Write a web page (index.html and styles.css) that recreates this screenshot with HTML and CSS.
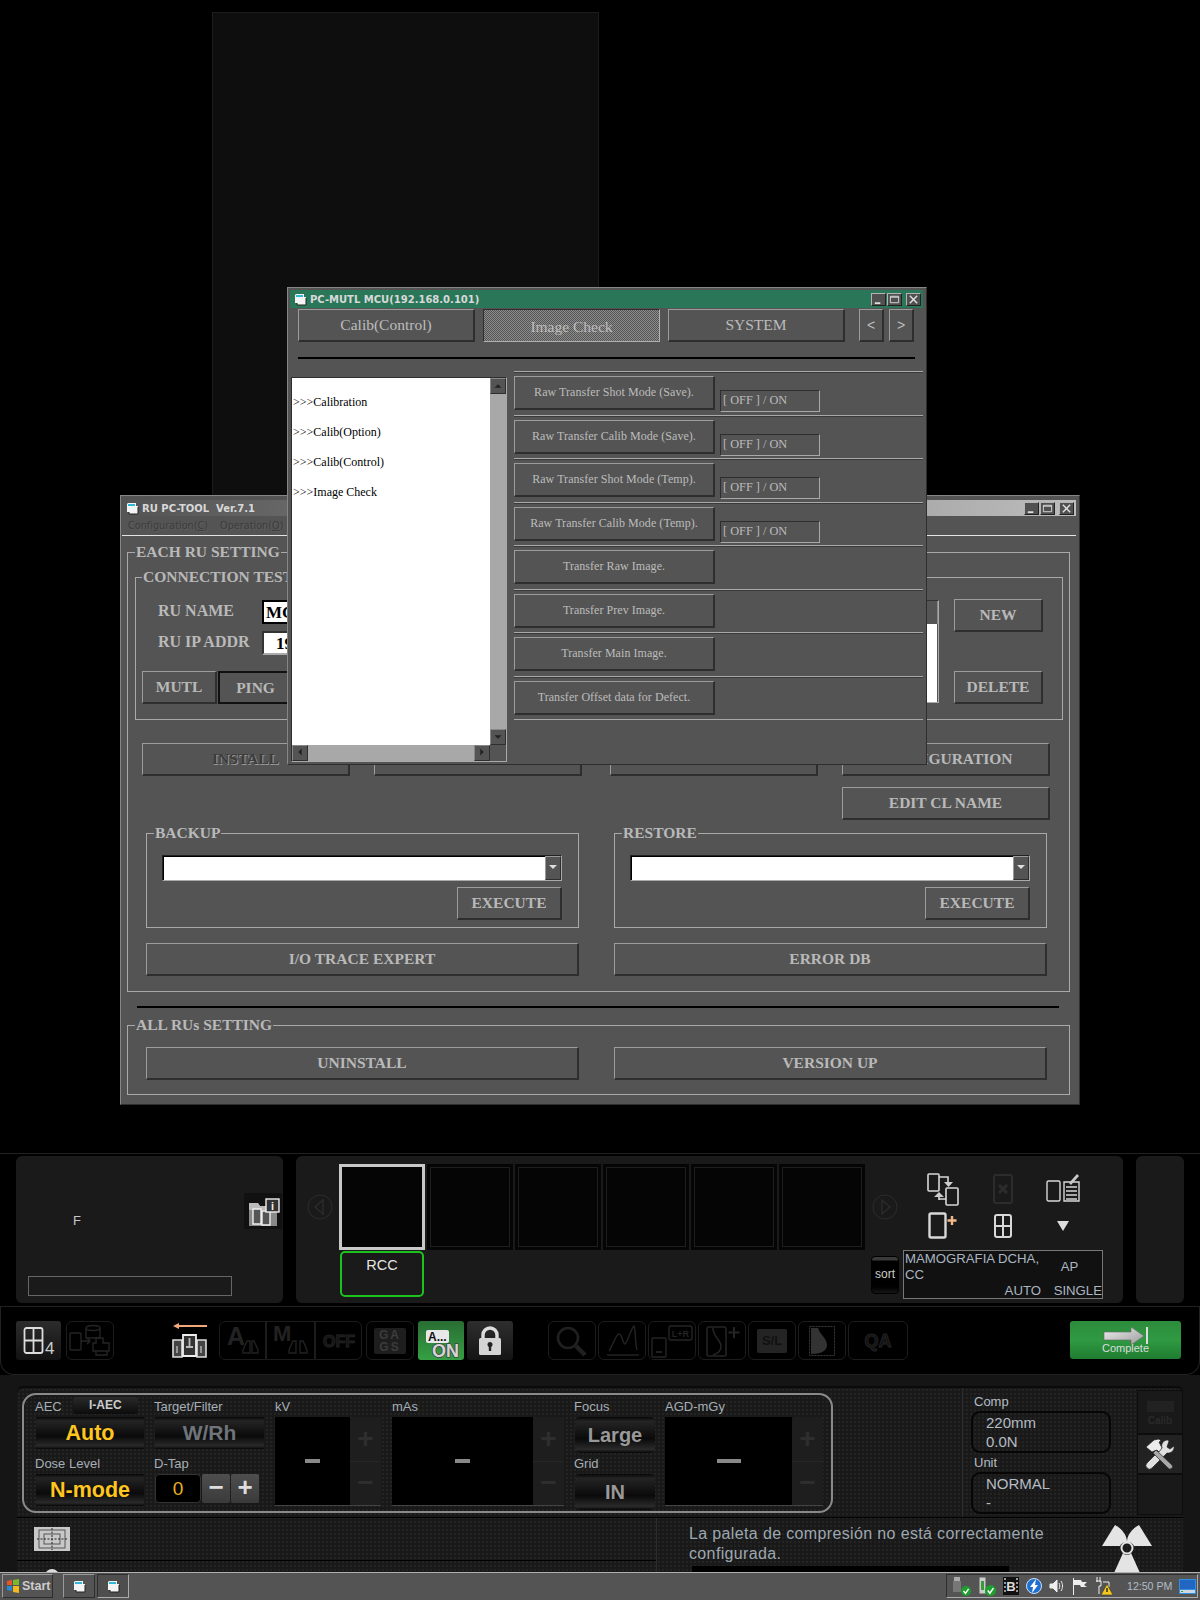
FILE: index.html
```html
<!DOCTYPE html>
<html lang="es">
<head>
    <meta charset="UTF-8">
    <title>RU PC-TOOL</title>
    <link rel="stylesheet" href="styles.css">
</head>
<body>
<svg class="defs" width="0" height="0">
    <symbol id="app" viewBox="0 0 14 14">
        <path d="M3 2h8v3h2v8H4v-2H2V3z" fill="#f4f4f4"/>
        <path d="M3 3h7v2H3z" fill="#30b8d8"/>
        <path d="M4 11v2h9V6" fill="none" stroke="#222"/>
    </symbol>
    <symbol id="tick" viewBox="0 0 10 10">
        <circle cx="5" cy="5" r="5" fill="#1e9e2e"/>
        <path d="M2.5 5l2 2.4L7.6 2.8" fill="none" stroke="#fff" stroke-width="1.4"/>
    </symbol>
</svg>
<div class="screen">
    <div class="viewer">
        <div class="view-pane"></div>

        <div class="window ru-window">
            <div class="titlebar titlebar-off">
                <svg class="title-icon"><use href="#app"/></svg>
                <span>RU PC-TOOL&nbsp; Ver.7.1</span>
                <div class="win-buttons">
                    <span class="win-btn"><svg viewBox="0 0 14 12"><path d="M3 9h6v2H3z" fill="#ddd"/></svg></span>
                    <span class="win-btn"><svg viewBox="0 0 14 12"><path d="M2.5 2.5h9v7h-9zM2.5 3.5h9" fill="none" stroke="#ddd"/></svg></span>
                    <span class="win-btn"><svg viewBox="0 0 14 12"><path d="M3 2l8 8M11 2l-8 8" stroke="#ddd" stroke-width="1.6"/></svg></span>
                </div>
            </div>
            <div class="menubar"><span>Configuration(<u>C</u>)</span><span>Operation(<u>O</u>)</span></div>

            <fieldset class="group group-each">
                <legend>EACH RU SETTING</legend>
                <fieldset class="group group-conn">
                    <legend>CONNECTION TEST</legend>
                    <div class="conn-body">
                        <div class="conn-left">
                            <div class="field-row"><label>RU NAME</label><div class="value value-name">MCU</div></div>
                            <div class="field-row field-row-ip"><label>RU IP ADDR</label><div class="value value-ip">192.168.0.101</div></div>
                            <div class="conn-buttons">
                                <div class="btn btn-mutl">MUTL</div>
                                <div class="btn btn-ping">PING</div>
                            </div>
                        </div>
                        <div class="ru-list">
                            <div class="ru-list-head"></div>
                            <div class="ru-list-body"></div>
                        </div>
                        <div class="conn-right">
                            <div class="btn">NEW</div>
                            <div class="btn">DELETE</div>
                        </div>
                    </div>
                </fieldset>
                <div class="actions">
                    <div class="btn btn-off">INSTALL</div>
                    <div class="btn"></div>
                    <div class="btn action-third"></div>
                    <div class="btn">CONFIGURATION</div>
                    <div class="btn action-edit">EDIT CL NAME</div>
                </div>
                <div class="pair">
                    <fieldset class="group group-file">
                        <legend>BACKUP</legend>
                        <div class="combo"><div class="combo-field"></div><div class="combo-arrow"></div></div>
                        <div class="btn btn-execute">EXECUTE</div>
                    </fieldset>
                    <fieldset class="group group-file">
                        <legend>RESTORE</legend>
                        <div class="combo"><div class="combo-field"></div><div class="combo-arrow"></div></div>
                        <div class="btn btn-execute">EXECUTE</div>
                    </fieldset>
                </div>
                <div class="pair pair-wide">
                    <div class="btn">I/O TRACE EXPERT</div>
                    <div class="btn">ERROR DB</div>
                </div>
            </fieldset>

            <div class="rule rule-ru"></div>

            <fieldset class="group group-all">
                <legend>ALL RUs SETTING</legend>
                <div class="pair pair-all">
                    <div class="btn">UNINSTALL</div>
                    <div class="btn">VERSION UP</div>
                </div>
            </fieldset>
        </div>

        <div class="window mcu-window">
            <div class="titlebar titlebar-on">
                <svg class="title-icon"><use href="#app"/></svg>
                <span>PC-MUTL MCU(192.168.0.101)</span>
                <div class="win-buttons">
                    <span class="win-btn"><svg viewBox="0 0 14 12"><path d="M3 9h6v2H3z" fill="#ddd"/></svg></span>
                    <span class="win-btn"><svg viewBox="0 0 14 12"><path d="M2.5 2.5h9v7h-9zM2.5 3.5h9" fill="none" stroke="#ddd"/></svg></span>
                    <span class="win-btn"><svg viewBox="0 0 14 12"><path d="M3 2l8 8M11 2l-8 8" stroke="#ddd" stroke-width="1.6"/></svg></span>
                </div>
            </div>
            <div class="tabs">
                <div class="tab">Calib(Control)</div>
                <div class="tab tab-on">Image Check</div>
                <div class="tab">SYSTEM</div>
                <div class="tab tab-arrow tab-prev">&lt;</div>
                <div class="tab tab-arrow">&gt;</div>
            </div>
            <div class="rule rule-mcu"></div>
            <div class="mcu-body">
                <div class="menu-list">
                    <div class="menu-items">
                        <div>&gt;&gt;&gt;Calibration</div>
                        <div>&gt;&gt;&gt;Calib(Option)</div>
                        <div>&gt;&gt;&gt;Calib(Control)</div>
                        <div>&gt;&gt;&gt;Image Check</div>
                    </div>
                    <div class="scroll-v">
                        <span class="scroll-btn"><svg viewBox="0 0 16 15"><path d="M4 10h8L8 6z" fill="#222"/></svg></span>
                        <span class="scroll-btn"><svg viewBox="0 0 16 15"><path d="M4 6h8L8 10z" fill="#222"/></svg></span>
                    </div>
                    <div class="scroll-h">
                        <span class="scroll-btn"><svg viewBox="0 0 16 15"><path d="M10 3v8L6 7z" fill="#222"/></svg></span>
                        <span class="scroll-btn"><svg viewBox="0 0 16 15"><path d="M6 3v8l4-4z" fill="#222"/></svg></span>
                    </div>
                    <div class="scroll-corner"></div>
                </div>
                <div class="transfers">
                    <div class="transfer"><div class="transfer-btn">Raw Transfer Shot Mode (Save).</div><div class="toggle">[ OFF ] / ON</div></div>
                    <div class="transfer"><div class="transfer-btn">Raw Transfer Calib Mode (Save).</div><div class="toggle">[ OFF ] / ON</div></div>
                    <div class="transfer"><div class="transfer-btn">Raw Transfer Shot Mode (Temp).</div><div class="toggle">[ OFF ] / ON</div></div>
                    <div class="transfer"><div class="transfer-btn">Raw Transfer Calib Mode (Temp).</div><div class="toggle">[ OFF ] / ON</div></div>
                    <div class="transfer"><div class="transfer-btn">Transfer Raw Image.</div></div>
                    <div class="transfer"><div class="transfer-btn">Transfer Prev Image.</div></div>
                    <div class="transfer"><div class="transfer-btn">Transfer Main Image.</div></div>
                    <div class="transfer"><div class="transfer-btn">Transfer Offset data for Defect.</div></div>
                </div>
            </div>
        </div>
    </div>

    <div class="study">
        <div class="panel patient">
            <div class="patient-top">
                <span class="patient-name">F</span>
                <span class="patient-info">
                    <svg width="38" height="36" viewBox="0 0 38 36">
                        <path d="M5 10h9l2 3h17v20H5z" fill="#888"/>
                        <path d="M5 10h9l2 3h17v4H5z" fill="#bbb"/>
                        <path d="M9 16h8v15H9zM18 18h8v14h-8z" fill="#555" stroke="#eee" stroke-width="1.4"/>
                        <rect x="22" y="6" width="13" height="13" fill="#333" stroke="#eee" stroke-width="1.4"/>
                        <text x="28.5" y="16.5" class="svg-bold" font-size="11" fill="#eee" text-anchor="middle">i</text>
                    </svg>
                </span>
            </div>
            <div class="patient-box"></div>
        </div>

        <div class="panel series">
            <div class="series-prev">
                <svg width="26" height="26" viewBox="0 0 26 26"><circle cx="13" cy="13" r="12" fill="none" stroke="#2c2c2c"/><path d="M16 6v14L8 13z" fill="none" stroke="#2c2c2c" stroke-width="1.4"/></svg>
            </div>
            <div class="thumbs">
                <div class="thumb thumb-on"></div>
                <div class="thumb"></div>
                <div class="thumb"></div>
                <div class="thumb"></div>
                <div class="thumb"></div>
                <div class="thumb"></div>
            </div>
            <div class="series-tools">
                <div class="series-next">
                    <svg width="26" height="26" viewBox="0 0 26 26"><circle cx="13" cy="13" r="12" fill="none" stroke="#2c2c2c"/><path d="M10 6v14l8-7z" fill="none" stroke="#2c2c2c" stroke-width="1.4"/></svg>
                </div>
                <div class="tool-grid">
                    <svg width="34" height="34" viewBox="0 0 34 34" fill="none" stroke="#d8d8d8" stroke-width="1.6">
                        <rect x="2" y="2" width="11" height="17" rx="1"/><rect x="20" y="16" width="12" height="17" rx="1"/>
                        <path d="M13 5h9v6M13 27h7"/><path d="M18 10h9l-4.500 5zM8 25l5-5 5 5z" fill="#ccc" stroke="none"/><path d="M13 25v3" />
                    </svg>
                    <svg width="20" height="30" viewBox="0 0 20 30" fill="none" stroke="#2c2c2c" stroke-width="2">
                        <rect x="1" y="1" width="18" height="28" rx="2"/><path d="M6 11l8 8M14 11l-8 8" stroke-width="3"/>
                    </svg>
                    <svg width="34" height="34" viewBox="0 0 34 34" fill="none" stroke="#d8d8d8" stroke-width="1.4">
                        <rect x="1" y="9" width="13" height="20" rx="1.500"/><path d="M18 10h15v19H18zM20 15h11M20 19h11M20 23h11M20 27h11"/>
                        <path d="M23 11l8-9 2 2-8 9z" fill="#c8c8c8" stroke="none"/>
                    </svg>
                    <svg width="30" height="28" viewBox="0 0 30 28" fill="none">
                        <rect x="1.500" y="1.500" width="16" height="24" rx="1.500" stroke="#d8d8d8" stroke-width="2.400"/>
                        <path d="M24 4v9M19.500 8.500h9" stroke="#f4b98a" stroke-width="2.400"/>
                    </svg>
                    <svg width="18" height="24" viewBox="0 0 18 24" fill="none" stroke="#d8d8d8" stroke-width="2">
                        <rect x="1" y="1" width="16" height="22" rx="2"/><path d="M9 1v22M1 12h16"/>
                    </svg>
                    <svg width="14" height="10" viewBox="0 0 14 10"><path d="M1 0h12L7 10z" fill="#ddd"/></svg>
                </div>
            </div>
            <div></div>
            <div class="thumb-label">RCC</div>
            <div class="exam-row">
                <div class="sort">sort</div>
                <div class="exam">
                    <div class="exam-title">MAMOGRAFIA DCHA, CC</div>
                    <div class="exam-view">AP</div>
                    <div class="exam-mode">AUTO</div>
                    <div class="exam-type">SINGLE</div>
                </div>
            </div>
        </div>

        <div class="panel panel-side"></div>
    </div>

    <div class="toolbar">
        <div class="tool t-layout">
            <svg width="42" height="36" viewBox="0 0 42 36" fill="none">
                <rect x="6.500" y="5" width="18" height="25" rx="2" stroke="#ddd" stroke-width="1.800"/>
                <path d="M15.500 5v25M6.500 17.500h18" stroke="#ddd" stroke-width="1.800"/>
                <text x="27" y="31" class="svg-sans" font-size="17" fill="#ccc">4</text>
            </svg>
        </div>
        <div class="tool t-route">
            <svg width="42" height="34" viewBox="0 0 42 34" fill="none" stroke="#242424" stroke-width="1.400">
                <ellipse cx="24" cy="4" rx="7" ry="2.500"/><path d="M17 4v10h14V4"/>
                <rect x="1" y="9" width="11" height="17" rx="1"/><path d="M12 17h9M18 14l3 3-3 3"/>
                <path d="M27 14h7v5h6v8h-16v-8h3zM27 27h11v4H27z"/>
            </svg>
        </div>
        <div class="tool-plain t-view">
            <svg width="38" height="38" viewBox="0 0 38 38" fill="none">
                <path d="M36 4H8" stroke="#f0a878" stroke-width="2"/><path d="M8 1L2 4l6 3z" fill="#f0a878"/>
                <path d="M2 18h9v17H2zM26 18h9v17h-9z" fill="#444" stroke="#ddd" stroke-width="1.600"/>
                <path d="M12 13h13v21H12z" fill="#333" stroke="#eee" stroke-width="1.800"/>
                <path d="M18.500 16v8M15 25h7" stroke="#bbb" stroke-width="1.800"/>
                <path d="M6 24v7M30 24v7" stroke="#aaa" stroke-width="1.600"/>
            </svg>
        </div>
        <div class="tool t-a">
            <svg width="42" height="36" viewBox="0 0 42 36">
                <text x="5" y="22" class="svg-bold" font-size="25" fill="#222">A</text>
                <path d="M25 18l-4 9v3h7v-12zM30 18v12h6v-3l-4-9z" fill="none" stroke="#222" stroke-width="1.300"/>
            </svg>
        </div>
        <div class="tool t-m">
            <svg width="44" height="36" viewBox="0 0 44 36">
                <text x="4" y="18" class="svg-bold" font-size="22" fill="#222">M</text>
                <path d="M24 18l-4 9v3h7v-12zM31 18v12h7v-3l-4-9z" fill="none" stroke="#222" stroke-width="1.300"/>
            </svg>
        </div>
        <div class="tool t-off">
            <svg width="42" height="22" viewBox="0 0 42 22"><text x="21" y="17" class="svg-bold" font-size="16" fill="#111" stroke="#222" text-anchor="middle">OFF</text></svg>
        </div>
        <div class="tool t-ga">
            <div class="ga-badge"><span>GA</span><span>GS</span></div>
        </div>
        <div class="tool tool-green t-on">
            <svg width="44" height="38" viewBox="0 0 44 38">
                <rect x="7" y="8" width="23" height="13" rx="2" fill="#e8e8e8"/>
                <text x="9" y="19" class="svg-bold" font-size="12" fill="#111">A...</text>
                <text x="13" y="35" class="svg-bold svg-outlined" font-size="18">ON</text>
            </svg>
        </div>
        <div class="tool tool-dark t-lock">
            <svg width="24" height="30" viewBox="0 0 24 30">
                <path d="M5 13V9a7 7 0 0 1 14 0v4" fill="none" stroke="#ddd" stroke-width="3.400"/>
                <rect x="1" y="12" width="22" height="17" rx="1.500" fill="#d4d4d4"/>
                <circle cx="12" cy="18.500" r="2.500" fill="#222"/><path d="M10.800 19h2.400v6h-2.400z" fill="#222"/>
            </svg>
        </div>
        <div class="tool t-search">
            <svg width="38" height="32" viewBox="0 0 38 32" fill="none" stroke="#202020">
                <circle cx="15" cy="13" r="10" stroke-width="2.600"/><path d="M23 21l9 9" stroke-width="4.500"/>
            </svg>
        </div>
        <div class="tool t-curve">
            <svg width="38" height="34" viewBox="0 0 38 34" fill="none" stroke="#242424" stroke-width="1.400">
                <path d="M4 31h32"/><path d="M6 27c4-6 7-17 10-17s4 10 6 10 6-16 9-18c2 5 1 18 3 24"/>
            </svg>
        </div>
        <div class="tool t-lr">
            <svg width="42" height="34" viewBox="0 0 42 34" fill="none" stroke="#242424" stroke-width="1.400">
                <rect x="1" y="14" width="14" height="19" rx="1"/><path d="M5 28h6" stroke-width="1.800"/>
                <rect x="18" y="2" width="23" height="14" rx="2"/>
                <text x="29.500" y="13" class="svg-bold" font-size="9" fill="#242424" stroke="none" text-anchor="middle">L+R</text>
            </svg>
        </div>
        <div class="tool t-mark">
            <svg width="36" height="34" viewBox="0 0 36 34" fill="none" stroke="#242424" stroke-width="1.600">
                <rect x="3" y="3" width="19" height="29" rx="1.500"/>
                <path d="M9 4c0 9 8 12 8 18 0 5-4 8-8 9"/><path d="M30 3v11M24.500 8.500h11" stroke-width="2"/>
            </svg>
        </div>
        <div class="tool t-sl">
            <div class="sl-badge">S/L</div>
        </div>
        <div class="tool t-ms">
            <svg width="26" height="30" viewBox="0 0 26 30" fill="none">
                <rect x=".500" y=".500" width="25" height="29" stroke="#3a3a3a" stroke-dasharray="2 1"/>
                <path d="M2 2h7c2 7 9 10 9 17 0 6-6 9-16 9z" fill="#333"/>
            </svg>
        </div>
        <div class="tool t-qa">
            <svg width="40" height="24" viewBox="0 0 40 24"><text x="20" y="18" class="svg-bold" font-size="18" fill="#111" stroke="#222" text-anchor="middle">QA</text></svg>
        </div>
        <div class="complete">
            <svg width="46" height="20" viewBox="0 0 46 20">
                <defs><linearGradient id="arrow" x1="0" y1="0" x2="1" y2="1"><stop offset="0" stop-color="#f0f0f0"/><stop offset="1" stop-color="#999"/></linearGradient></defs>
                <path d="M1 6h27V1l13 9-13 9v-5H1z" fill="url(#arrow)" stroke="#666" stroke-width=".6"/>
                <path d="M44 1v17" stroke="#ddd" stroke-width="2"/>
            </svg>
            <span>Complete</span>
        </div>
    </div>

    <div class="console">
        <div class="console-panel">
            <div class="console-top">
                <div class="exposure">
                    <div class="exp-col exp-aec">
                        <div class="exp-head"><span>AEC</span><span class="iaec">I-AEC</span></div>
                        <div class="mode mode-on">Auto</div>
                        <div class="exp-head exp-head-low"><span>Dose Level</span></div>
                        <div class="mode mode-on">N-mode</div>
                    </div>
                    <div class="exp-col exp-target">
                        <div class="exp-head"><span>Target/Filter</span></div>
                        <div class="mode mode-off">W/Rh</div>
                        <div class="exp-head exp-head-low"><span>D-Tap</span></div>
                        <div class="dtap">
                            <span class="dtap-value">0</span>
                            <span class="dtap-btn">−</span>
                            <span class="dtap-btn">+</span>
                        </div>
                    </div>
                    <div class="exp-col exp-kv">
                        <div class="exp-head"><span>kV</span></div>
                        <div class="readout"><div class="readout-screen"><i></i></div><div class="stepper"><span>+</span><span>−</span></div></div>
                    </div>
                    <div class="exp-col exp-mas">
                        <div class="exp-head"><span>mAs</span></div>
                        <div class="readout"><div class="readout-screen"><i></i></div><div class="stepper"><span>+</span><span>−</span></div></div>
                    </div>
                    <div class="exp-col exp-focus">
                        <div class="exp-head"><span>Focus</span></div>
                        <div class="mode mode-focus">Large</div>
                        <div class="exp-head exp-head-grid"><span>Grid</span></div>
                        <div class="mode mode-focus">IN</div>
                    </div>
                    <div class="exp-col exp-agd">
                        <div class="exp-head"><span>AGD-mGy</span></div>
                        <div class="readout"><div class="readout-screen readout-big"><i></i></div><div class="stepper"><span>+</span><span>−</span></div></div>
                    </div>
                </div>
                <div class="comp">
                    <div class="comp-label">Comp</div>
                    <div class="comp-box"><span>220mm</span><span>0.0N</span></div>
                    <div class="comp-label">Unit</div>
                    <div class="comp-box"><span>NORMAL</span><span>-</span></div>
                </div>
                <div class="rail">
                    <div class="rail-cell rail-calib"><i></i><span>Calib</span></div>
                    <div class="rail-cell rail-tools">
                        <svg width="30" height="32" viewBox="0 0 30 32">
                            <path d="M23 2a6 6 0 0 0-6 8L2 25a3 3 0 0 0 5 5l15-15a6 6 0 0 0 7-7l-4 3-3-2 2-6z" fill="#e0e0e0" stroke="#222" stroke-width=".7"/>
                            <path d="M11 12l16 15a2.500 2.500 0 0 1-4 3L8 15z" fill="#a8a8a8" stroke="#222" stroke-width=".7"/>
                            <path d="M1 9l8-7 5-1 2 2-2 1 2 4 1 2-3 4-2-2-3 1-2 1z" fill="#ececec" stroke="#222" stroke-width=".7"/>
                        </svg>
                    </div>
                    <div class="rail-cell rail-empty"></div>
                </div>
            </div>
            <div class="console-bottom">
                <div class="console-left">
                    <div class="aim">
                        <div class="aim-icon">
                            <svg width="30" height="22" viewBox="0 0 30 22" fill="none" stroke="#555">
                                <rect x="2" y="2" width="26" height="18"/><rect x="7" y="6" width="16" height="10"/>
                                <path d="M0 11h30M15 0v22" stroke="#222" stroke-dasharray="2 1.500"/>
                            </svg>
                        </div>
                    </div>
                    <div class="standby"><i></i><span>STANDBY</span></div>
                </div>
                <div class="console-msg">
                    <div class="msg-col">
                        <div class="msg-text">La paleta de compresión no está correctamente configurada.</div>
                        <div class="msg-bar"></div>
                    </div>
                    <svg class="radiation" width="52" height="54" viewBox="0 0 52 54">
                        <path d="M14 1L1 22h18c1-2 3-4 7-4 0-7-5-13-12-17z" fill="#e4e4e4"/>
                        <path d="M38 1l13 21H33c-1-2-3-4-7-4 0-7 5-13 12-17z" fill="#e4e4e4"/>
                        <path d="M26 31c-2 0-3-1-4-2L13 49h26l-9-20c-1 1-2 2-4 2z" fill="#e4e4e4"/>
                        <circle cx="26" cy="24" r="5.500" fill="none" stroke="#e4e4e4" stroke-width="2"/>
                    </svg>
                </div>
            </div>
        </div>
    </div>

    <div class="taskbar">
        <div class="start">
            <svg width="14" height="14" viewBox="0 0 14 14">
                <path d="M1 2l5-1v5H1z" fill="#e8542a"/><path d="M7 1l6-1v6H7z" fill="#7cb82e"/>
                <path d="M1 7h5v5l-5-1z" fill="#2a88d8"/><path d="M7 7h6v7l-6-1z" fill="#f4b81c"/>
            </svg>
            <span>Start</span>
        </div>
        <div class="task"><svg width="14" height="14"><use href="#app"/></svg></div>
        <div class="task task-on"><svg width="14" height="14"><use href="#app"/></svg></div>
        <div class="tray">
            <svg width="18" height="20" viewBox="0 0 18 20"><path d="M1 1h6v4H1z" fill="#aaa"/><path d="M0 5h8v11H0z" fill="#777"/><use href="#tick" x="8" y="10" width="10" height="10"/></svg>
            <svg width="18" height="20" viewBox="0 0 18 20"><path d="M1 1h7v17H1z" fill="#ccc" stroke="#555"/><path d="M3 5h3v9H3z" fill="#3a9a3a"/><use href="#tick" x="7" y="9" width="11" height="11"/></svg>
            <svg width="16" height="18" viewBox="0 0 16 18"><rect width="16" height="18" fill="#111"/><path d="M1 1h2v2H1zM1 5h2v2H1zM1 9h2v2H1zM1 13h2v2H1zM13 1h2v2h-2zM13 5h2v2h-2zM13 9h2v2h-2zM13 13h2v2h-2z" fill="#999"/><text x="8" y="14" class="svg-bold" font-size="13" fill="#ddd" text-anchor="middle">B</text></svg>
            <svg width="16" height="18" viewBox="0 0 16 18"><circle cx="8" cy="9" r="7.500" fill="#1f6fd0" stroke="#cfe0f4"/><path d="M10 2L4 10h3l-1 6 6-8H9z" fill="#fff"/></svg>
            <svg width="16" height="16" viewBox="0 0 16 16" fill="none" stroke="#eee"><path d="M1 6h3l4-4v12l-4-4H1z" fill="#eee"/><path d="M10 5c1 2 1 4 0 6M12 3c2 3 2 7 0 10"/></svg>
            <svg width="16" height="17" viewBox="0 0 16 17"><path d="M1.500 0v17" stroke="#eee"/><path d="M2 2h7l1 2h5l-3 3 3 2H9L8 7H2z" fill="#eee"/></svg>
            <svg width="18" height="20" viewBox="0 0 18 20" fill="none"><path d="M2 1v5M5 1v5M1 5h5v5H4v8" stroke="#eee"/><path d="M8 6h6v5" stroke="#eee"/><path d="M12 8l6 11H6z" fill="#f2c81e" stroke="#333" stroke-width=".6"/><path d="M12 12v4" stroke="#222" stroke-width="1.400"/></svg>
            <span class="clock">12:50 PM</span>
            <svg class="desk" width="17" height="15" viewBox="0 0 17 15"><rect width="17" height="15" fill="#2f8fe0"/><rect x="1" y="1" width="15" height="9" fill="#2266c4"/><path d="M1 11h15v3H1z" fill="#cfd8e0"/><path d="M2 12h2v1H2z" fill="#3aa53a"/></svg>
        </div>
    </div>
</div>
</body>
</html>
```

FILE: styles.css
```css
* {
    box-sizing: border-box;
}
html, body {
    margin: 0;
    background: #000;
}
.defs {
    display: block;
    height: 0;
}
.screen {
    width: 1200px;
    height: 1600px;
    overflow: hidden;
    display: flex;
    flex-direction: column;
    font-family: "Liberation Sans", Arial, sans-serif;
}
.svg-bold {
    font-family: "Liberation Sans", Arial, sans-serif;
    font-weight: bold;
}
.svg-sans {
    font-family: "Liberation Sans", Arial, sans-serif;
}
.svg-outlined {
    fill: #d4d4d4;
    stroke: #444;
    stroke-width: 1.6px;
    paint-order: stroke;
}

/* viewer area + the two old win32 windows */
.viewer {
    position: relative;
    height: 1153px;
    flex: none;
}
.view-pane {
    width: 387px;
    height: 500px;
    margin: 0 0 0 212px;
    position: relative;
    top: 12px;
    background: #0e0e0e;
    border: 1px solid #1c1c1c;
}
.window {
    position: absolute;
    background: #545454;
    border: 1px solid;
    border-color: #868686 #2e2e2e #2e2e2e #868686;
    font-family: "Liberation Serif", "Times New Roman", serif;
    color: #bcbcbc;
}
.ru-window {
    left: 120px;
    top: 495px;
    width: 960px;
    height: 610px;
    padding: 4px 3px 0 1px;
}
.mcu-window {
    left: 287px;
    top: 287px;
    width: 640px;
    height: 478px;
    padding: 2px 3px 0 2px;
}
.titlebar {
    display: flex;
    align-items: center;
    font-family: "DejaVu Sans", sans-serif;
    font-weight: bold;
    font-size: 10px;
    color: #d8d8d8;
}
.titlebar-off {
    height: 16px;
    background: linear-gradient(90deg, #545454, #bcbcbc);
}
.titlebar-on {
    height: 18px;
    background: #297758;
}
.title-icon {
    width: 14px;
    height: 14px;
    margin: 0 3px 0 3px;
}
.win-buttons {
    margin-left: auto;
    display: flex;
    gap: 1px;
    padding-right: 2px;
}
.win-btn {
    width: 15px;
    height: 13px;
    background: #505050;
    border: 1px solid;
    border-color: #b4b4b4 #222 #222 #b4b4b4;
    display: block;
}
.win-btn:last-child {
    margin-left: 3px;
}
.win-btn svg {
    display: block;
    width: 13px;
    height: 11px;
}
.menubar {
    height: 20px;
    display: flex;
    gap: 12px;
    padding: 1px 0 0 6px;
    font-family: "DejaVu Sans", sans-serif;
    font-size: 9.7px;
    line-height: 18px;
    color: #3c3c3c;
    text-shadow: 1px 1px 0 #5e5e5e;
    border-bottom: 1px solid #e4e4e4;
}
.group {
    margin: 0;
    padding: 0;
    min-width: 0;
    border: 1px solid #a9a9a9;
}
.group legend {
    padding: 0 1px;
    margin-left: 0;
    font-size: 15.5px;
    font-weight: bold;
    line-height: 18px;
    color: #b9b9b9;
}
.group-each {
    margin: 7px 6px 0 5px;
    padding: 0 6px 15px 7px;
}
.group-conn {
    margin-top: 7px;
    padding: 14px 19px 15px 6px;
}
.conn-body {
    display: flex;
}
.conn-left {
    width: 308px;
    flex: none;
}
.field-row {
    display: flex;
    align-items: center;
    height: 24px;
}
.field-row-ip {
    margin-top: 7px;
}
.field-row label {
    width: 120px;
    padding-left: 16px;
    font-size: 16px;
    margin-top: -3px;
}
.field-row label, .btn {
    font-weight: bold;
    color: #b9b9b9;
}
.btn {
    font-size: 15.5px;
}
.value {
    width: 180px;
    height: 24px;
    background: #fff;
    color: #000;
    font-size: 17px;
    font-weight: bold;
    line-height: 21px;
    border: 2px solid #000;
    padding-left: 2px;
}
.value-ip {
    border-color: #333 #aaa #aaa #333;
    padding-left: 12px;
}
.conn-buttons {
    display: flex;
    margin-top: 16px;
}
.btn {
    height: 33px;
    display: flex;
    align-items: center;
    justify-content: center;
    border: 1px solid;
    border-width: 1px 2px 2px 1px;
    border-color: #9c9c9c #2e2e2e #2e2e2e #9c9c9c;
    background: #545454;
}
.btn-mutl {
    width: 75px;
}
.btn-ping {
    width: 75px;
    margin-left: 1px;
    border: 2px solid #111;
    border-color: #111 #111 #111 #111;
}
.ru-list {
    width: 489px;
    height: 103px;
    flex: none;
    border: 1px solid;
    border-color: #333 #aaa #aaa #333;
    display: flex;
    flex-direction: column;
}
.ru-list-head {
    height: 23px;
    border-right: 1px solid #888;
}
.ru-list-body {
    flex: 1;
    background: #fff;
    margin-right: 1px;
}
.conn-right {
    width: 89px;
    flex: none;
    margin: -1px 0 0 15px;
    display: flex;
    flex-direction: column;
    justify-content: space-between;
}
.actions {
    display: grid;
    grid-template-columns: 208px 208px 212px 208px;
    column-gap: 24px;
    row-gap: 11px;
    margin: 23px 0 0 7px;
}
.action-third {
    width: 208px;
    justify-self: end;
}
.action-edit {
    grid-column: 4;
}
.btn-off {
    color: #3c3c3c;
    text-shadow: 1px 1px 0 #9a9a9a;
}
.pair {
    display: grid;
    grid-template-columns: 433px 433px;
    column-gap: 35px;
    margin: 4px 0 0 11px;
}
.pair-wide {
    margin-top: 15px;
}
.group-file {
    padding: 13px 16px 8px 15px;
    height: 104px;
}
.group-file legend {
    margin-left: -8px;
}
.combo {
    display: flex;
    height: 26px;
    border: 1px solid;
    border-color: #222 #aaa #aaa #222;
}
.combo-field {
    flex: 1;
    background: #fff;
    border-top: 1px solid #000;
    border-left: 1px solid #000;
}
.combo-arrow {
    width: 16px;
    position: relative;
    border: 1px solid;
    border-color: #999 #2e2e2e #2e2e2e #999;
}
.combo-arrow::after {
    content: "";
    position: absolute;
    left: 3px;
    top: 8px;
    border: 4px solid transparent;
    border-top: 4px solid #ddd;
}
.btn-execute {
    width: 105px;
    margin: 6px 0 0 auto;
}
.rule {
    height: 2px;
    background: #000;
}
.rule-ru {
    margin: 14px 17px 0 15px;
}
.group-all {
    margin: 8px 6px 0 5px;
    padding: 13px 24px 14px 18px;
}
.group-all legend {
    margin-left: -11px;
}
.pair-all {
    margin: 0;
}

/* mcu window */
.tabs {
    display: flex;
    margin: 1px 0 0 8px;
}
.tab {
    width: 177px;
    height: 33px;
    margin-right: 8px;
    display: flex;
    align-items: center;
    justify-content: center;
    font-size: 15.5px;
    color: #bcbcbc;
    border: 1px solid;
    border-width: 1px 2px 2px 1px;
    border-color: #9c9c9c #2e2e2e #2e2e2e #9c9c9c;
}
.tab-on {
    border-width: 1px 1px 1px 1px;
    border-color: #2e2e2e #b0b0b0 #b0b0b0 #2e2e2e;
    background: repeating-conic-gradient(#8c8c8c 0 25%, #555 0 50%) 0 0 / 2px 2px;
    padding-top: 2px;
}
.tab-arrow {
    width: 25px;
    margin-right: 5px;
    font-family: "Liberation Sans", sans-serif;
    font-size: 14px;
}
.tab-prev {
    margin-left: 6px;
}
.rule-mcu {
    margin: 15px 8px 0 8px;
}
.mcu-body {
    display: flex;
    margin-top: 12px;
}
.menu-list {
    width: 216px;
    height: 385px;
    margin: 6px 0 0 1px;
    display: grid;
    grid-template-columns: 198px 16px;
    grid-template-rows: 367px 16px;
    border: 1px solid;
    border-color: #2e2e2e #a9a9a9 #a9a9a9 #2e2e2e;
}
.menu-items {
    background: #fff;
    color: #000;
    font-size: 12px;
    padding-top: 9px;
    padding-left: 1px;
    line-height: 30px;
}
.scroll-v {
    background: #a8a8a8;
    display: flex;
    flex-direction: column;
    justify-content: space-between;
}
.scroll-h {
    background: #a8a8a8;
    display: flex;
    justify-content: space-between;
}
.scroll-btn {
    width: 16px;
    height: 16px;
    display: block;
    background: #545454;
    border: 1px solid;
    border-color: #888 #2e2e2e #2e2e2e #888;
}
.scroll-btn svg {
    display: block;
    width: 14px;
    height: 13px;
}
.transfers {
    width: 409px;
    margin-left: 7px;
    display: grid;
    grid-auto-rows: 43.5px;
    border-bottom: 1px solid #a9a9a9;
    height: 349px;
}
.transfer {
    display: flex;
    border-top: 1px solid #a9a9a9;
    box-shadow: inset 0 1px 0 #3a3a3a;
}
.transfer-btn {
    width: 201px;
    height: 34px;
    margin-top: 4px;
    display: flex;
    align-items: center;
    justify-content: center;
    font-size: 12px;
    letter-spacing: .05px;
    color: #bcbcbc;
    border: 1px solid;
    border-width: 1px 2px 2px 1px;
    border-color: #9c9c9c #2e2e2e #2e2e2e #9c9c9c;
}
.toggle {
    width: 100px;
    height: 22px;
    margin: 18px 0 0 5px;
    padding-left: 2px;
    font-size: 12.3px;
    line-height: 19px;
    color: #bcbcbc;
    border: 1px solid;
    border-color: #2e2e2e #a9a9a9 #a9a9a9 #2e2e2e;
}

/* study strip */
.study {
    flex: none;
    height: 154px;
    border-top: 1px solid #222;
    border-bottom: 1px solid #222;
    padding: 2px 16px 0 16px;
    display: flex;
    gap: 13px;
    color: #c8c8c8;
}
.panel {
    height: 147px;
    background: #1a1a1a;
    border-radius: 6px;
}
.patient {
    width: 267px;
    padding: 0 1px 0 12px;
}
.patient-top {
    height: 120px;
    display: flex;
    align-items: flex-start;
}
.patient-name {
    margin: 57px 0 0 45px;
    font-size: 13px;
}
.patient-info {
    margin: 37px 0 0 auto;
    width: 38px;
    height: 36px;
    background: #111;
    display: block;
}
.patient-info svg {
    display: block;
}
.patient-box {
    width: 204px;
    height: 20px;
    border: 1px solid #666;
}
.series {
    width: 827px;
    display: grid;
    grid-template-columns: 43px 528px 1fr;
    grid-template-rows: 94px 1fr;
}
.series-prev {
    padding: 38px 0 0 11px;
}
.thumbs {
    padding-top: 8px;
    display: flex;
    gap: 2px;
}
.thumb {
    width: 86px;
    height: 86px;
    background: #050505;
    position: relative;
    border: 3px solid #050505;
    outline: 1px solid #1e1e1e;
    outline-offset: -4px;
}
.thumb-on {
    border-color: #c8c8c8;
    outline: none;
}
.series-tools {
    display: flex;
    padding-left: 5px;
}
.series-next {
    padding-top: 38px;
}
.tool-grid {
    width: 175px;
    margin-left: 15px;
    padding-top: 14px;
    display: grid;
    grid-template-columns: 60px 60px 60px;
    grid-template-rows: 37px 37px;
    justify-items: center;
    align-items: center;
}
.thumb-label {
    width: 84px;
    height: 46px;
    margin: 1px 0 0 1px;
    border: 2px solid #1ec21e;
    border-radius: 5px;
    text-align: center;
    font-size: 14.5px;
    line-height: 17px;
    padding-top: 4px;
    color: #e4e4e4;
}
.exam-row {
    display: flex;
    padding-left: 4px;
    align-items: flex-start;
}
.sort {
    width: 28px;
    height: 38px;
    margin-top: 6px;
    background: linear-gradient(#3a3a3a 0, #3a3a3a 3px, #000 4px, #000 30px, #1e1e1e 38px);
    border: 1px solid #000;
    border-radius: 4px;
    color: #ccc;
    font-size: 12px;
    line-height: 34px;
    text-align: center;
}
.exam {
    width: 200px;
    height: 49px;
    margin-left: 4px;
    border: 1px solid #777;
    background: #111;
    color: #aab6c2;
    font-size: 13.2px;
    line-height: 16px;
    display: grid;
    grid-template-columns: 136px 1fr;
    grid-template-rows: 32px 15px;
    padding-left: 1px;
}
.exam-view {
    text-align: center;
    align-self: center;
    padding-right: 4px;
}
.exam-mode {
    text-align: right;
}
.exam-type {
    text-align: right;
}
.panel-side {
    width: 48px;
}

/* toolbar */
.toolbar {
    flex: none;
    height: 68px;
    padding-top: 14px;
    display: flex;
    align-items: flex-start;
    border-bottom: 1px solid #222;
    border-radius: 0 0 14px 14px;
    border-left: 1px solid #222;
    border-right: 1px solid #222;
    padding-left: 15px;
}
.tool, .tool-plain {
    height: 39px;
    flex: none;
    display: flex;
    align-items: center;
    justify-content: center;
}
.tool {
    width: 48px;
    margin-left: 2px;
    border: 1px solid #1c1c1c;
    border-radius: 6px;
}
.t-layout {
    width: 45px;
    margin-left: 0;
    background: linear-gradient(#2c2c2c, #121212);
    border: none;
    border-radius: 3px;
}
.t-route {
    margin-left: 5px;
}
.t-view {
    width: 38px;
    margin-left: 57px;
}
.t-a {
    width: 47px;
    margin-left: 10px;
    border-radius: 6px 0 0 6px;
}
.t-m {
    width: 49px;
    margin-left: 0;
    border-radius: 0;
}
.t-off {
    width: 47px;
    margin-left: 0;
    border-radius: 0 6px 6px 0;
}
.t-ga {
    margin-left: 4px;
}
.ga-badge {
    width: 32px;
    height: 26px;
    background: #1e1e1e;
    border-radius: 2px;
    display: flex;
    flex-direction: column;
    align-items: center;
    font-size: 12px;
    font-weight: bold;
    line-height: 12px;
    letter-spacing: 2px;
    color: #3c3c3c;
    padding-top: 1px;
}
.tool-green {
    width: 46px;
    margin-left: 4px;
    border: none;
    border-radius: 3px;
    background: linear-gradient(#2a6d33, #34a044);
}
.tool-dark {
    width: 46px;
    margin-left: 3px;
    border: none;
    border-radius: 3px;
    background: linear-gradient(#2e2e2e, #141414);
}
.t-search {
    margin-left: 35px;
}
.sl-badge {
    width: 30px;
    height: 24px;
    background: #242424;
    border-radius: 2px;
    font-size: 13px;
    font-weight: bold;
    line-height: 24px;
    text-align: center;
    color: #111;
}
.t-qa {
    width: 60px;
}
.complete {
    width: 111px;
    height: 38px;
    margin-left: 162px;
    background: linear-gradient(#2c8c3c, #2f9a42 50%, #1f7c30);
    border-radius: 3px;
    display: flex;
    flex-direction: column;
    align-items: center;
    padding-top: 5px;
    font-size: 11px;
    line-height: 10px;
    color: #ddd;
}
.complete svg {
    display: block;
    margin-bottom: -3px;
}

/* bottom console */
.console {
    flex: none;
    height: 197px;
    overflow: hidden;
    background: #151515;
    padding: 13px 0 0 17px;
}
.console-panel {
    width: 1166px;
    height: 200px;
    border-radius: 6px 6px 0 0;
    background-color: #191919;
    background-image: radial-gradient(circle, #242424 .9px, transparent 1.1px);
    background-size: 4px 4px;
    box-shadow: 0 -2px 0 #0a0a0a;
    color: #a6aeb6;
    font-size: 13px;
}
.console-top {
    height: 130px;
    display: flex;
    border-bottom: 1px solid #000;
}
.exposure {
    width: 811px;
    height: 120px;
    margin: 5px 0 0 5px;
    border: 2px solid #8a8a8a;
    border-radius: 14px;
    padding: 2px 0 0 12px;
    display: flex;
}
.exp-col {
    margin-right: 11px;
}
.exp-aec {
    width: 108px;
}
.exp-target {
    width: 109px;
}
.exp-kv {
    width: 106px;
}
.exp-mas {
    width: 172px;
}
.exp-focus {
    width: 80px;
    margin-right: 10px;
}
.exp-agd {
    width: 158px;
    margin-right: 0;
}
.exp-head {
    height: 20px;
    line-height: 20px;
    display: flex;
    margin-left: -1px;
}
.exp-kv .exp-head, .exp-mas .exp-head, .exp-agd .exp-head {
    margin-left: 0;
}
.exp-head-low, .exp-head-grid {
    margin-top: 5px;
}
.iaec {
    width: 65px;
    height: 17px;
    margin: 0 0 0 11px;
    background: linear-gradient(#2a2a2a, #0c0c0c);
    border-radius: 3px;
    color: #ccc;
    font-size: 12px;
    font-weight: bold;
    line-height: 16px;
    text-align: center;
}
.mode {
    height: 32px;
    background: linear-gradient(#070707, #242424 12%, #0a0a0a 60%, #2a2a2a 90%, #060606);
    font-size: 21.5px;
    font-weight: bold;
    line-height: 32px;
    text-align: center;
}
.mode-on {
    color: #ffc61e;
}
.mode-off {
    color: #6e747a;
    font-size: 21px;
}
.mode-focus {
    height: 36px;
    line-height: 36px;
    font-size: 20px;
    color: #999;
    border-radius: 5px;
}
.exp-head-grid {
    margin-top: 1px;
}
.dtap {
    display: flex;
    gap: 1px;
    height: 29px;
}
.dtap-value {
    width: 46px;
    background: #000;
    border: 1px solid #333;
    border-radius: 4px;
    color: #e8b020;
    font-size: 19px;
    line-height: 27px;
    text-align: center;
}
.dtap-btn {
    width: 28px;
    background: linear-gradient(#4e4e4e, #3a3a3a);
    border-radius: 2px;
    color: #ddd;
    font-size: 26px;
    font-weight: bold;
    line-height: 26px;
    text-align: center;
}
.readout {
    display: flex;
    height: 89px;
    border-bottom: 1px solid #444;
}
.readout-screen {
    flex: 1;
    background: #000;
    display: flex;
    align-items: center;
    justify-content: center;
}
.readout-screen i {
    display: block;
    width: 15px;
    height: 4px;
    background: #888;
}
.readout-big i {
    width: 24px;
}
.stepper {
    width: 31px;
    display: flex;
    flex-direction: column;
    background: #1e1e1e;
    border-radius: 4px;
    color: #2e2e2e;
    font-size: 28px;
    font-weight: bold;
}
.stepper span {
    flex: 1;
    display: flex;
    align-items: center;
    justify-content: center;
}
.stepper span + span {
    border-top: 1px solid #262626;
}
.comp {
    width: 175px;
    margin-left: 129px;
    border-left: 1px solid #2c2c2c;
    padding: 4px 0 0 8px;
    color: #b4bcc4;
}
.comp-label {
    height: 19px;
    line-height: 19px;
    padding-left: 3px;
}
.comp-box {
    width: 140px;
    height: 42px;
    border: 2px solid #060606;
    border-radius: 9px;
    padding-left: 13px;
    font-size: 15px;
    line-height: 19px;
    display: flex;
    flex-direction: column;
}
.rail {
    width: 46px;
    padding-top: 2px;
}
.rail-cell {
    border: 1px solid #0c0c0c;
    background: #191919;
    display: flex;
    flex-direction: column;
    align-items: center;
}
.rail-calib {
    height: 44px;
    padding-top: 10px;
    font-size: 10px;
    font-weight: bold;
    color: #2a2a2a;
}
.rail-calib i {
    display: block;
    width: 27px;
    height: 11px;
    background: #222;
    margin-bottom: 3px;
}
.rail-tools {
    height: 40px;
    background: #222;
    justify-content: center;
}
.rail-empty {
    height: 41px;
}
.console-bottom {
    display: flex;
    height: 54px;
    overflow: hidden;
}
.console-left {
    width: 640px;
    border-right: 1px solid #2c2c2c;
}
.aim {
    height: 43px;
    padding: 9px 0 0 17px;
    border-bottom: 1px solid #000;
}
.aim-icon {
    width: 36px;
    height: 24px;
    background: #c8c8c8;
    display: flex;
    align-items: center;
    justify-content: center;
}
.standby {
    display: flex;
    align-items: flex-start;
    padding: 8px 0 0 28px;
    font-size: 14px;
    color: #666;
}
.standby i {
    width: 14px;
    height: 14px;
    background: #ddd;
    border-radius: 50%;
    margin-right: 18px;
}
.console-msg {
    flex: 1;
    display: flex;
    padding: 6px 0 0 32px;
}
.msg-col {
    width: 370px;
}
.msg-text {
    font-size: 16px;
    letter-spacing: .36px;
    line-height: 20px;
    color: #9ea8b0;
}
.msg-bar {
    width: 317px;
    height: 8px;
    margin: 2px 0 0 3px;
    background: #000;
}
.radiation {
    margin-left: 42px;
    flex: none;
}

/* taskbar */
.taskbar {
    flex: none;
    height: 28px;
    background: #545454;
    border-top: 1px solid #b0b0b0;
    display: flex;
    padding: 1px 2px 0 2px;
}
.start {
    width: 51px;
    height: 24px;
    display: flex;
    align-items: center;
    gap: 2px;
    padding-left: 3px;
    font-size: 12.5px;
    font-weight: bold;
    color: #ccc;
    border: 1px solid;
    border-color: #999 #2e2e2e #2e2e2e #999;
}
.task {
    width: 32px;
    height: 24px;
    margin-left: 10px;
    display: flex;
    align-items: center;
    justify-content: center;
    border: 1px solid;
    border-color: #999 #2e2e2e #2e2e2e #999;
}
.task + .task {
    margin-left: 2px;
}
.task-on {
    border-color: #2e2e2e #aaa #aaa #2e2e2e;
    background: #4e4e4e;
}
.tray {
    width: 252px;
    height: 24px;
    margin-left: auto;
    display: flex;
    align-items: center;
    gap: 7px;
    padding-left: 6px;
    border: 1px solid;
    border-color: #2e2e2e #aaa #aaa #2e2e2e;
}
.tray svg {
    flex: none;
}
.clock {
    margin-left: 7px;
    font-size: 10.6px;
    color: #b0bcc8;
    white-space: nowrap;
}
```
